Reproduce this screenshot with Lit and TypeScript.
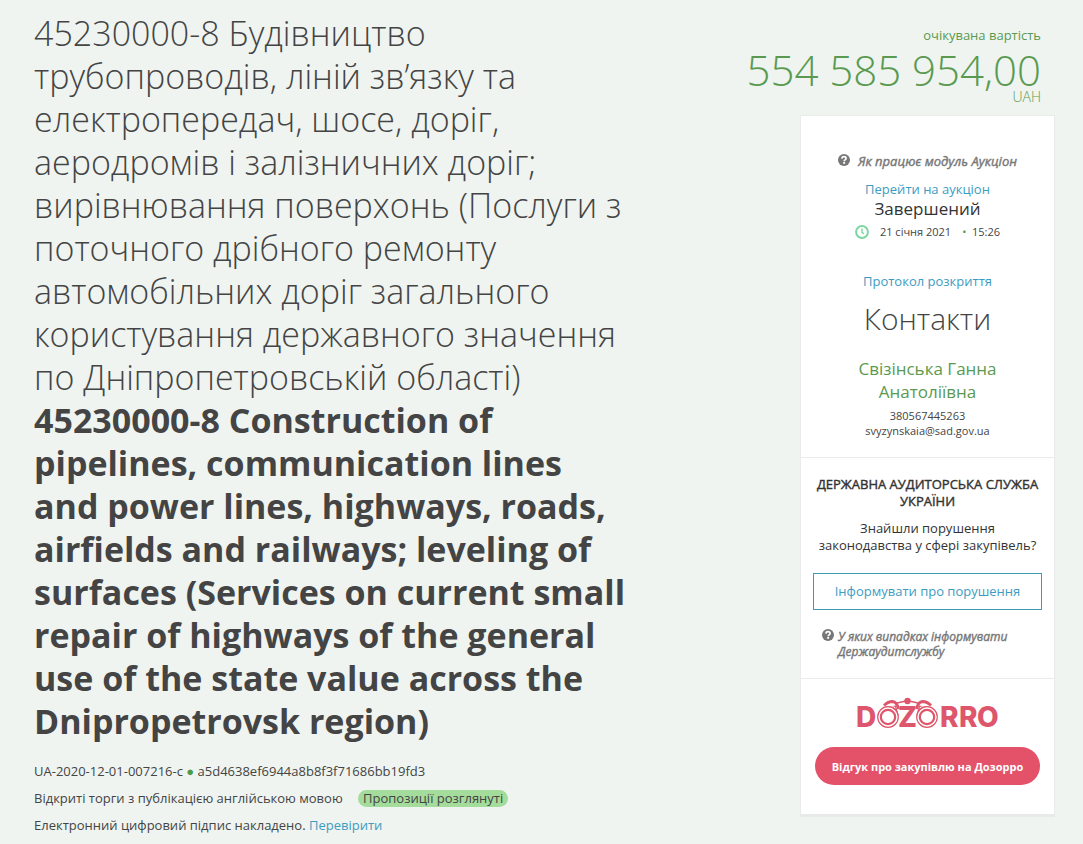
import { LitElement, html, css, svg } from "lit";
import { customElement } from "lit/decorators.js";

const questionIcon = html`<svg class="q" viewBox="0 0 12 12" aria-hidden="true">
  <circle cx="6" cy="6" r="6" fill="currentColor" />
  <path d="M3.900 4.600C4 3.300 4.900 2.700 6 2.700c1.200 0 2.100.700 2.100 1.800 0 1.400-1.900 1.400-1.900 2.700" fill="none" stroke="#fff" stroke-width="1.700" />
  <rect x="5.200" y="8" width="1.900" height="1.800" fill="#fff" />
</svg>`;

const clockIcon = html`<svg class="clock" viewBox="0 0 14 14" aria-hidden="true">
  <circle cx="7" cy="7" r="5.900" fill="none" stroke="#7ed6a0" stroke-width="2" />
  <path d="M7 3.500v4l2 1.200" fill="none" stroke="#7ed6a0" stroke-width="1.400" />
</svg>`;

// One half of the binoculars; the other half is its mirror image.
const barrel = svg`
  <path d="M23 17 L29 10 L41 8.500 L43.500 18 Z" fill="#de566b" />
  <path d="M29 8.500 Q33 4.500 37.500 4.500 Q42 5 43.500 12" fill="none" stroke="#de566b" stroke-width="2.800" />
  <path d="M30 10.300 Q35 7 40.500 11" fill="none" stroke="#fff" stroke-width="1" />
  <path d="M40 6.500 L52 3.800" fill="none" stroke="#de566b" stroke-width="1.600" />
  <circle cx="33" cy="20" r="10.300" fill="#fff" stroke="#de566b" stroke-width="1.200" />
  <circle cx="33" cy="20" r="7.200" fill="none" stroke="#de566b" stroke-width="2.200" />`;

@customElement("app-root")
export class AppRoot extends LitElement {
  static styles = css`
    :host {
      display: block;
      min-height: 100vh;
      box-sizing: border-box;
      background: #eff4f1;
      color: #444;
      font: 13px/17px "Open Sans", sans-serif;
    }
    * { box-sizing: border-box; }
    h1, h2, h3, p { margin: 0; font-weight: 400; }
    a { color: #3d9cc2; text-decoration: none; }
    .page {
      display: grid;
      grid-template-columns: minmax(0, 1fr) 255px;
      column-gap: 172px;
      padding: 12px 28px 8px 34px;
    }
    .title { font-size: 34px; line-height: 43px; font-weight: 300; }
    .title strong { display: block; font-weight: 700; }
    .meta { display: grid; gap: 10px; padding-top: 20px; }
    .dot { color: #4f9a44; }
    .badge {
      display: inline-block;
      margin-left: 12px;
      padding: 0 5px;
      border-radius: 9px;
      background: #a4dc9c;
    }
    .value { padding: 15px 14px 0 0; color: #5a9a50; text-align: right; }
    .sum {
      display: flex;
      justify-content: flex-end;
      margin-top: 7px;
      font-size: 42px;
      line-height: 38px;
      font-weight: 300;
      white-space: nowrap;
    }
    .value .currency { font-size: 14px; line-height: 16px; font-weight: 300; }
    .card {
      margin-top: 10px;
      background: #fff;
      border: 1px solid #e8ecea;
      border-bottom: 0;
      box-shadow: 0 3px 1px #e7eae7;
      text-align: center;
    }
    .part { padding: 18px 12px; border-bottom: 1px solid #e9eceb; }
    .part:last-child { border-bottom: 0; }
    .auction { padding-top: 37px; }
    .hint {
      display: inline-flex;
      gap: 8px;
      color: #777;
      font-size: 13px;
      line-height: 15px;
      font-style: italic;
      -webkit-text-stroke: 0.4px currentColor;
      text-align: left;
    }
    .q { width: 12px; height: 12px; flex: none; }
    .link { margin-top: 11px; }
    .status { font-size: 17px; line-height: 22px; color: #333; }
    .date {
      display: flex;
      justify-content: center;
      align-items: center;
      gap: 11px;
      margin-top: 3px;
      font-size: 11px;
      line-height: 17px;
    }
    .clock { width: 14px; height: 14px; }
    .protocol { margin-top: 33px; }
    .contacts { margin-top: 9px; font-size: 30px; line-height: 39px; font-weight: 300; }
    .name { margin-top: 19px; padding: 0 40px; font-size: 17px; line-height: 23px; color: #5a9a50; }
    .small { font-size: 11px; line-height: 15px; }
    .name + .small { margin-top: 5px; }
    .auction { padding-bottom: 19px; }
    .agency { font-size: 13px; color: #333; white-space: nowrap; -webkit-text-stroke: 0.4px currentColor; }
    .question { margin-top: 10px; color: #333; }
    .report {
      display: block;
      width: 100%;
      height: 37px;
      margin: 19px 0;
      border: 1px solid #3c9cb0;
      background: #fff;
      color: #3d9cc2;
      font: inherit;
      cursor: pointer;
    }
    .cases { display: flex; padding: 0 0 1px 9px; gap: 4px; font-size: 12px; }
    .dozorro { padding: 18px 14px 29px; }
    .logo { display: block; margin: 0 auto; width: 146px; height: 38px; }
    .letters { font: 800 28px Inter, sans-serif; fill: #de566b; }
    .review {
      width: 100%;
      height: 38px;
      margin-top: 12px;
      padding: 0;
      border: 0;
      border-radius: 19px;
      background: #e4526a;
      color: #fff;
      font: 700 11px/15px "Open Sans", sans-serif;
      cursor: pointer;
    }
  `;

  render() {
    return html`<main class="page">
      <section>
        <h1 class="title">
          45230000-8 Будівництво трубопроводів, ліній зв’язку та електропередач, шосе, доріг, аеродромів і залізничних доріг; вирівнювання поверхонь (Послуги з поточного дрібного ремонту автомобільних доріг загального користування державного значення по Дніпропетровській області)
          <strong>45230000-8 Construction of pipelines, communication lines and power lines, highways, roads, airfields and railways; leveling of surfaces (Services on current small repair of highways of the general use of the state value across the Dnipropetrovsk region)</strong>
        </h1>
        <div class="meta">
          <p>UA-2020-12-01-007216-c <span class="dot">●</span> a5d4638ef6944a8b8f3f71686bb19fd3</p>
          <p>Відкриті торги з публікацією англійською мовою <span class="badge">Пропозиції розглянуті</span></p>
          <p>Електронний цифровий підпис накладено. <a href="#">Перевірити</a></p>
        </div>
      </section>
      <aside>
        <div class="value">
          <p>очікувана вартість</p>
          <p class="sum">554 585 954,00</p>
          <p class="currency">UAH</p>
        </div>
        <div class="card">
          <section class="part auction">
            <a class="hint" href="#">${questionIcon}<span>Як працює модуль Аукціон</span></a>
            <p class="link"><a href="#">Перейти на аукціон</a></p>
            <p class="status">Завершений</p>
            <p class="date">${clockIcon}<span>21 січня 2021</span><span><span class="dot">•</span>&nbsp; 15:26</span></p>
            <p class="protocol"><a href="#">Протокол розкриття</a></p>
            <h2 class="contacts">Контакти</h2>
            <p class="name">Свізінська Ганна Анатоліївна</p>
            <p class="small">380567445263</p>
            <p class="small">svyzynskaia@sad.gov.ua</p>
          </section>
          <section class="part">
            <h3 class="agency">ДЕРЖАВНА АУДИТОРСЬКА СЛУЖБА<br />УКРАЇНИ</h3>
            <p class="question">Знайшли порушення законодавства у сфері закупівель?</p>
            <button class="report" type="button">Інформувати про порушення</button>
            <a class="hint cases" href="#">${questionIcon}<span>У яких випадках інформувати Держаудитслужбу</span></a>
          </section>
          <section class="part dozorro">
            <svg class="logo" viewBox="0 0 146 38" role="img" aria-label="Dozorro">
              ${barrel}
              <g transform="translate(105 0) scale(-1 1)">${barrel}</g>
              <circle cx="52.500" cy="4" r="3.200" fill="#de566b" />
              <g class="letters"><text x="1" y="30">D</text><text x="43" y="30">Z</text><text x="85" y="30">R</text><text x="104" y="30">R</text><text x="122" y="30">O</text></g>
            </svg>
            <button class="review" type="button">Відгук про закупівлю на Дозорро</button>
          </section>
        </div>
      </aside>
    </main>`;
  }
}
